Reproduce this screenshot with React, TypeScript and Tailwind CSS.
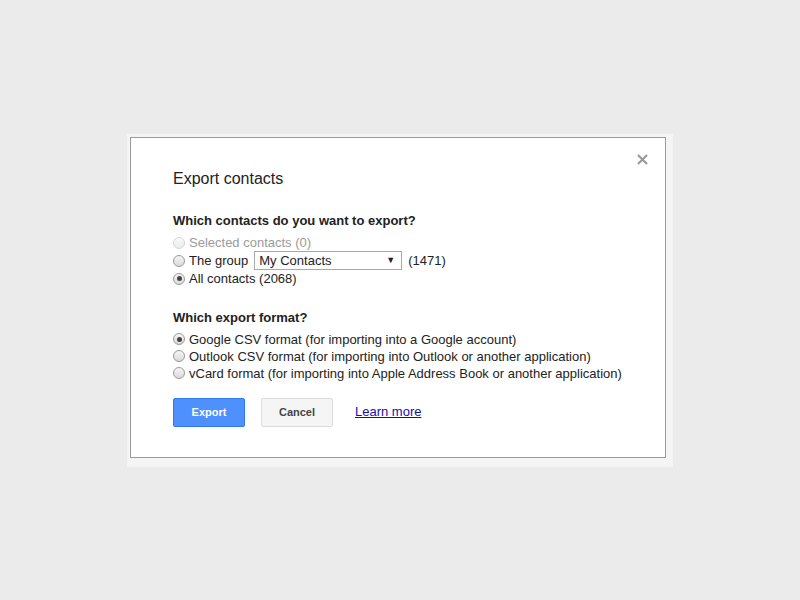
import React from 'react'

function Radio({ checked = false, disabled = false }: { checked?: boolean; disabled?: boolean }) {
  return (
    <span
      className={
        'relative inline-block h-[12px] w-[12px] shrink-0 rounded-full border ' +
        (disabled
          ? 'border-[#d4d4d4] bg-gradient-to-b from-[#fafafa] to-[#ececec]'
          : 'border-[#9a9a9a] bg-gradient-to-b from-[#f6f6f6] to-[#d9d9d9]')
      }
    >
      {checked && (
        <span className="absolute left-[2.5px] top-[2.5px] h-[5px] w-[5px] rounded-full bg-[#444]" />
      )}
    </span>
  )
}

function Option({
  checked,
  disabled,
  children,
  tall,
}: {
  checked?: boolean
  disabled?: boolean
  children: React.ReactNode
  tall?: boolean
}) {
  return (
    <div className={'flex items-center gap-[4px] ' + (tall ? 'h-[18px]' : 'h-[17px]')}>
      <Radio checked={checked} disabled={disabled} />
      <div className={disabled ? 'text-[#9b9b9b]' : ''}>{children}</div>
    </div>
  )
}

export default function App() {
  return (
    <div
      className="flex h-[600px] w-full items-center justify-center bg-[#ebebeb] text-[13px] text-[#222]"
      style={{ fontFamily: '"Liberation Sans", Arial, sans-serif' }}
    >
      <div className="bg-[#f5f5f5] pb-[9px] pl-[3px] pr-[7px] pt-[3px]">
        <div className="relative h-[321px] w-[536px] border border-[#9a9a9a] bg-white pl-[42px] pt-[31px]">
          <button className="absolute right-[16px] top-[15px] flex h-[14px] w-[14px] items-center justify-center">
            <svg width="11" height="11" viewBox="0 0 11 11">
              <path d="M1 1L10 10M10 1L1 10" stroke="#9a9a9a" strokeWidth="2.2" />
            </svg>
          </button>

          <h2 className="h-[20px] text-[16px] leading-[20px] text-[#222]">Export contacts</h2>

          <div className="mt-[23px] h-[18px] font-bold leading-[18px]">
            Which contacts do you want to export?
          </div>
          <div className="mt-[4px] flex flex-col leading-[18px]">
            <Option tall disabled>
              Selected contacts (0)
            </Option>
            <div className="flex h-[18px] items-center gap-[4px]">
              <Radio />
              <span>The group</span>
              <div className="ml-[2px] flex h-[19px] w-[148px] items-center justify-between border border-[#a9a9a9] bg-white pl-[4px] pr-[6px]">
                <span>My Contacts</span>
                <span className="text-[9px] leading-none">▼</span>
              </div>
              <span className="ml-[2px]">(1471)</span>
            </div>
            <Option tall checked>
              All contacts (2068)
            </Option>
          </div>

          <div className="mt-[21px] h-[18px] font-bold leading-[18px]">Which export format?</div>
          <div className="mt-[4px] flex flex-col leading-[17px]">
            <Option checked>Google CSV format (for importing into a Google account)</Option>
            <Option>Outlook CSV format (for importing into Outlook or another application)</Option>
            <Option>vCard format (for importing into Apple Address Book or another application)</Option>
          </div>

          <div className="mt-[16px] flex items-center">
            <button className="h-[29px] w-[72px] rounded-[2px] border border-[#3079ed] bg-[#4d90fe] text-[11px] font-bold text-white">
              Export
            </button>
            <button className="ml-[16px] h-[29px] w-[72px] rounded-[2px] border border-[#dcdcdc] bg-[#f5f5f5] text-[11px] font-bold text-[#444]">
              Cancel
            </button>
            <a href="#" className="ml-[22px] text-[13px] text-[#1a0dab] underline">
              Learn more
            </a>
          </div>
        </div>
      </div>
    </div>
  )
}
